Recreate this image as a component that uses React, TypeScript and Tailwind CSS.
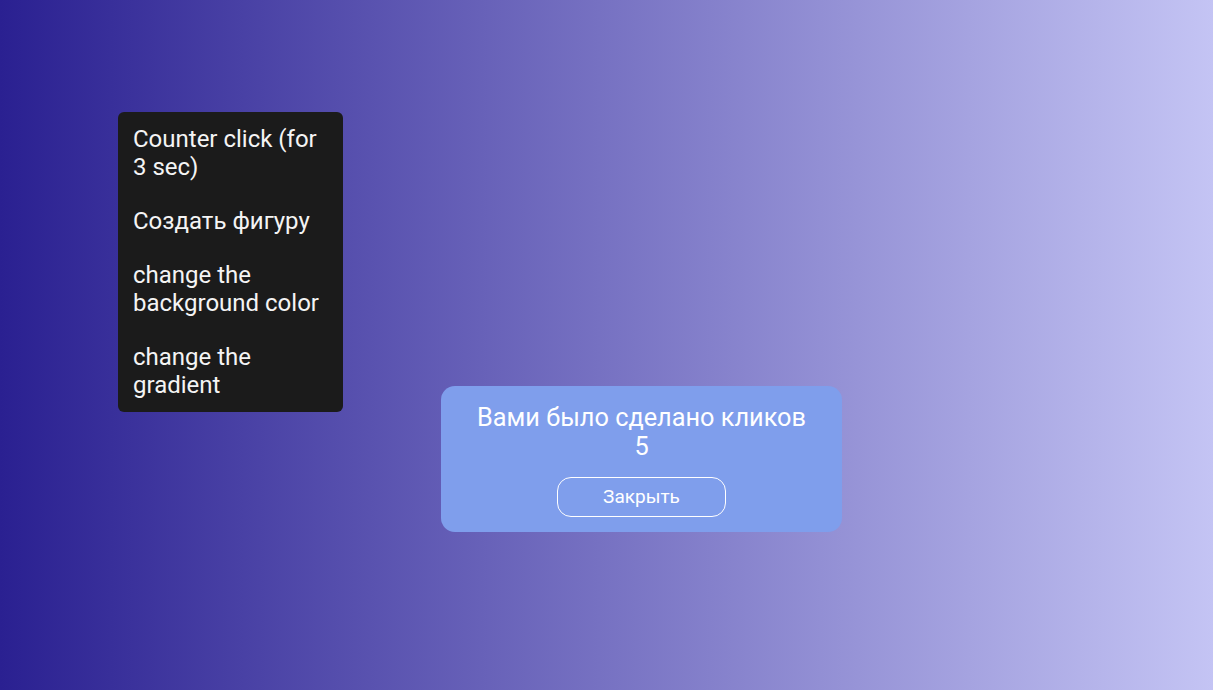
export default function App() {
  const items = [
    "Counter click (for 3 sec)",
    "Создать фигуру",
    "change the background color",
    "change the gradient",
  ];
  return (
    <div
      className="relative w-full h-[690px] overflow-hidden bg-[linear-gradient(to_right,#2a2091,#c4c4f4)] text-white"
      style={{ fontFamily: "Roboto, 'Noto Sans', sans-serif" }}
    >
      <ul className="absolute left-[118px] top-[112px] w-[225px] rounded-[6px] bg-[#1b1b1b] py-[13px]">
        {items.map((t) => (
          <li key={t} className="px-[15px] py-[13px] first:pt-0 last:pb-0 text-[24px] leading-[28px] text-[#f4f4f4]">
            {t}
          </li>
        ))}
      </ul>
      <div className="absolute left-[441px] top-[386px] w-[401px] h-[146px] rounded-[14px] bg-[#7f9eec] flex flex-col items-center pt-[17px]">
        <div className="text-[25.3px] leading-[29px] text-center">
          Вами было сделано кликов
          <br />5
        </div>
        <button className="mt-[16px] w-[169px] h-[40px] rounded-[14px] border border-white text-[19px] leading-[24px] text-white">
          Закрыть
        </button>
      </div>
    </div>
  );
}
